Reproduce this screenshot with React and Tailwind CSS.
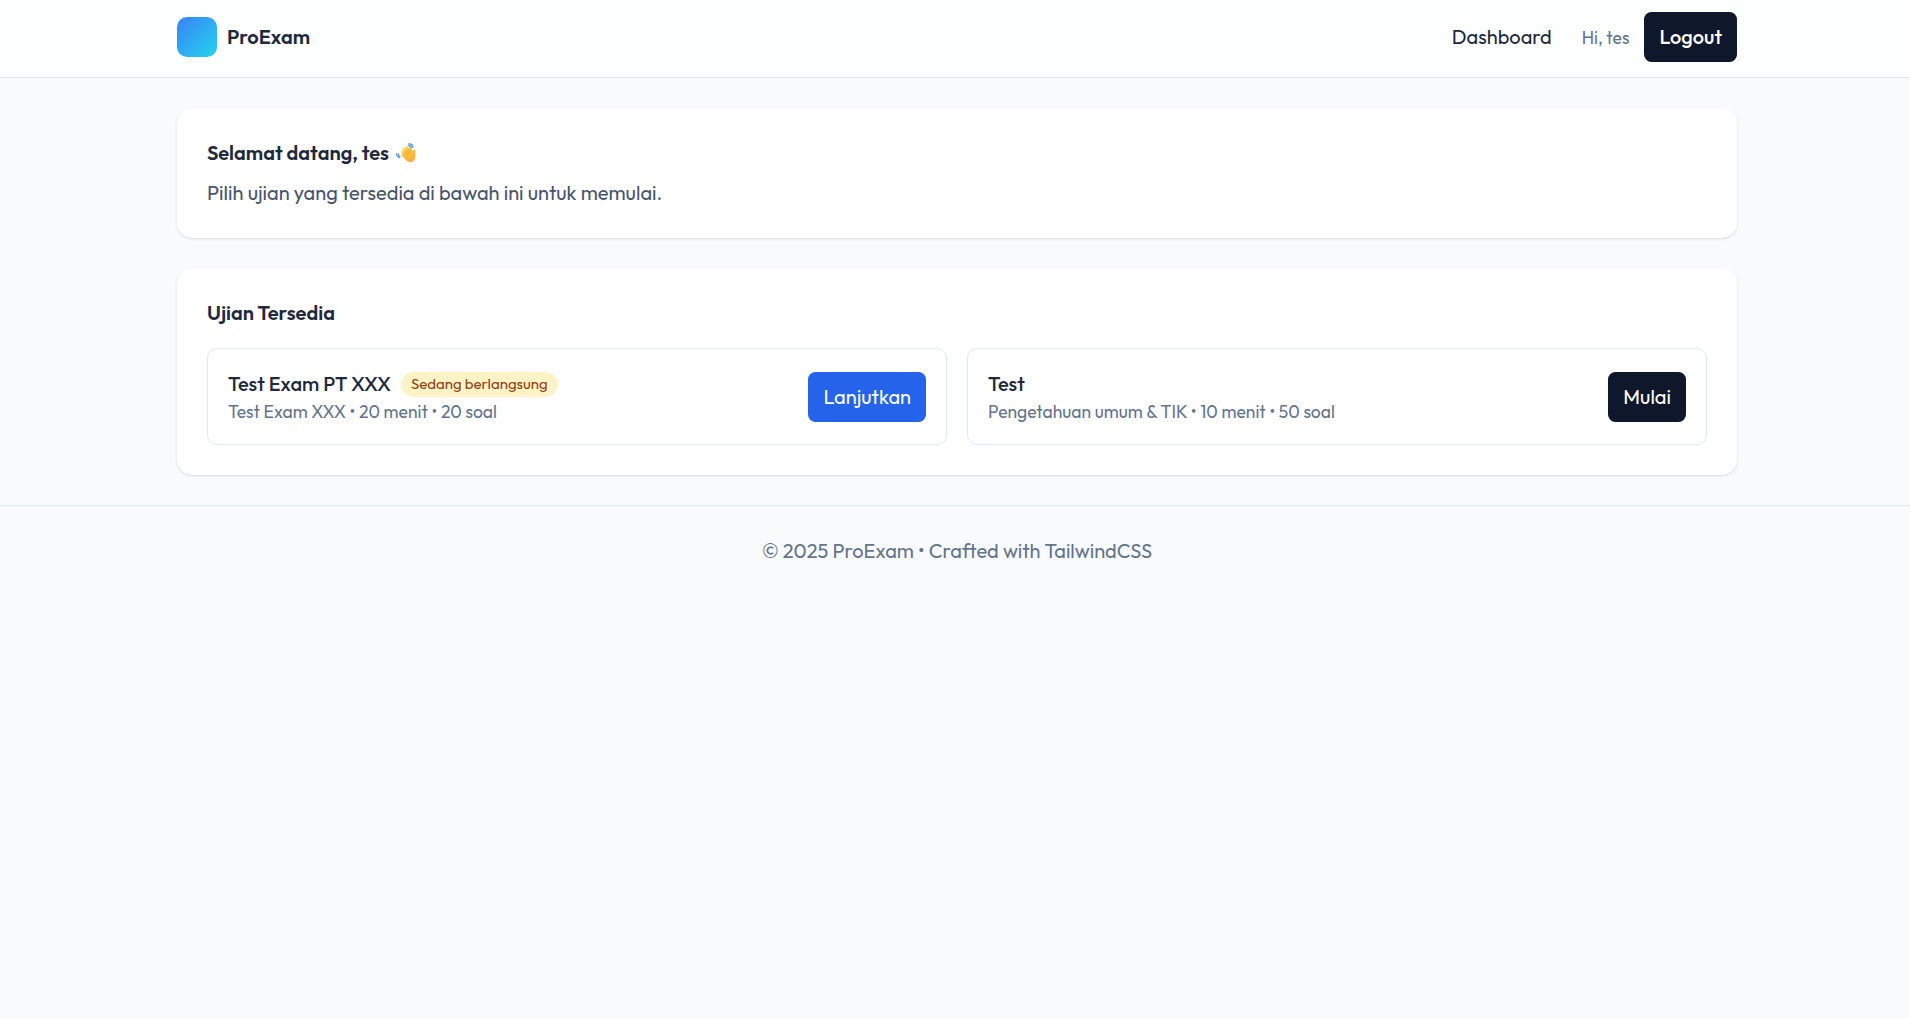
import React from 'react';

const exams = [
    { id: 1, title: 'Test Exam PT XXX', category: 'Test Exam XXX', minutes: 20, questions: 20, ongoing: true },
    { id: 2, title: 'Test', category: 'Pengetahuan umum & TIK', minutes: 10, questions: 50, ongoing: false },
];

const WavingHand = () => (
    <svg className="ml-[7px] h-5 w-5" viewBox="0 0 20 20" fill="none" role="img" aria-label="👋">
        <defs>
            <linearGradient id="hand" x1="8" y1="4" x2="16" y2="20" gradientUnits="userSpaceOnUse">
                <stop stopColor="#ffce4a" />
                <stop offset="1" stopColor="#fbab35" />
            </linearGradient>
        </defs>
        <g stroke="url(#hand)" strokeWidth="2.5" strokeLinecap="round">
            <path d="M6.7 9.2 L11 14" />
            <path d="M7.9 6 L12.5 12" />
            <path d="M10.6 4.4 L14 11" />
            <path d="M13.8 4.8 L16 11" />
        </g>
        <path
            d="M7 10.5 L15.5 6.8 L17 8.8 C17 6.8 18.1 6 19.1 6.6 C20 7.2 19.4 8.8 19.4 10.6 C19.7 13.6 19.4 16.4 17.6 18 C15.5 19.8 12.3 19.4 10.2 17.2 L6.2 13.3 C4.9 11.8 5.8 10.3 7 10.5 Z"
            fill="url(#hand)"
        />
        <path d="M8.3 8.8 L11 12 M10.2 7.2 L12.8 10.8 M12.8 6.5 L14.4 9.7" stroke="#e9962d" strokeWidth="0.7" strokeLinecap="round" />
        <g stroke="#3a8fd8" strokeWidth="1.1" strokeLinecap="round">
            <path d="M12.6 1.1 C14.8 0.3 17 1.9 17 4.4" />
            <path d="M12.5 2.7 C14 2.4 15.1 3.3 15.4 4.6" />
            <path d="M0.8 10.6 C0.4 12.9 1.7 14.7 3.9 14.7" />
            <path d="M2.3 10.9 C2.1 12.3 2.8 13.2 4.1 13.3" />
        </g>
    </svg>
);

const Navbar = () => (
    <header className="border-b border-[#e2e8f0] bg-[#fdfefe]">
        <div className="mx-auto flex h-[77px] w-[1560px] items-center justify-between pb-[3px]">
            <a href="#" className="flex items-center gap-2.5">
                <span className="h-10 w-10 rounded-[10px] bg-linear-to-br/srgb from-[#3b82f6] to-[#22d3ee]"></span>
                <span className="font-semibold">ProExam</span>
            </a>
            <nav className="flex items-center">
                <a href="#" className="mr-[30px]">Dashboard</a>
                <span className="mr-[15px] text-[17.5px] leading-[25px] text-[#64748b]">Hi, tes</span>
                <button className="rounded-[7.5px] bg-[#0f172a] px-[15px] py-2.5 font-medium text-white">Logout</button>
            </nav>
        </div>
    </header>
);

const ExamCard = ({ exam }) => (
    <div className="flex items-center justify-between rounded-[10px] border border-[#e2e8f0] p-5">
        <div>
            <div className="flex items-center gap-2.5 font-medium">
                {exam.title}
                {exam.ongoing && (
                    <span className="rounded-full bg-[#fef3c7] px-2.5 py-[2.5px] text-[15px] leading-5 font-normal text-[#92400e]">
                        Sedang berlangsung
                    </span>
                )}
            </div>
            <div className="text-[17.5px] leading-[25px] text-[#64748b]">
                {`${exam.category} • ${exam.minutes} menit • ${exam.questions} soal`}
            </div>
        </div>
        {exam.ongoing ? (
            <button className="rounded-[7.5px] bg-[#2563eb] px-[15px] py-2.5 text-white">Lanjutkan</button>
        ) : (
            <button className="rounded-[7.5px] bg-[#0f172a] px-[15px] py-2.5 text-white">Mulai</button>
        )}
    </div>
);

const App = () => {
    return (
        <div className="min-h-screen overflow-x-hidden bg-[#f8fafc]">
            <div className="w-[1914px] font-['Outfit','Lato',sans-serif] text-[20px] leading-[30px] text-[#1e293b]">
                <Navbar />

                <main className="mx-auto w-[1560px] space-y-[30px] py-[30px]">
                    {/* Welcome */}
                    <section className="rounded-[15px] bg-white p-[30px] shadow-sm">
                        <h1 className="mb-2.5 flex items-center font-semibold">
                            Selamat datang, tes
                            <WavingHand />
                        </h1>
                        <p className="text-[#475569]">Pilih ujian yang tersedia di bawah ini untuk memulai.</p>
                    </section>

                    {/* Available exams */}
                    <section className="rounded-[15px] bg-white p-[30px] shadow-sm">
                        <h2 className="mb-5 font-semibold">Ujian Tersedia</h2>
                        <div className="grid grid-cols-2 gap-5">
                            {exams.map((exam) => (
                                <ExamCard key={exam.id} exam={exam} />
                            ))}
                        </div>
                    </section>
                </main>

                <footer className="border-t border-[#e2e8f0] py-[30px] text-center text-[#64748b]">
                    © 2025 ProExam • Crafted with TailwindCSS
                </footer>
            </div>
        </div>
    );
};

export default App;
